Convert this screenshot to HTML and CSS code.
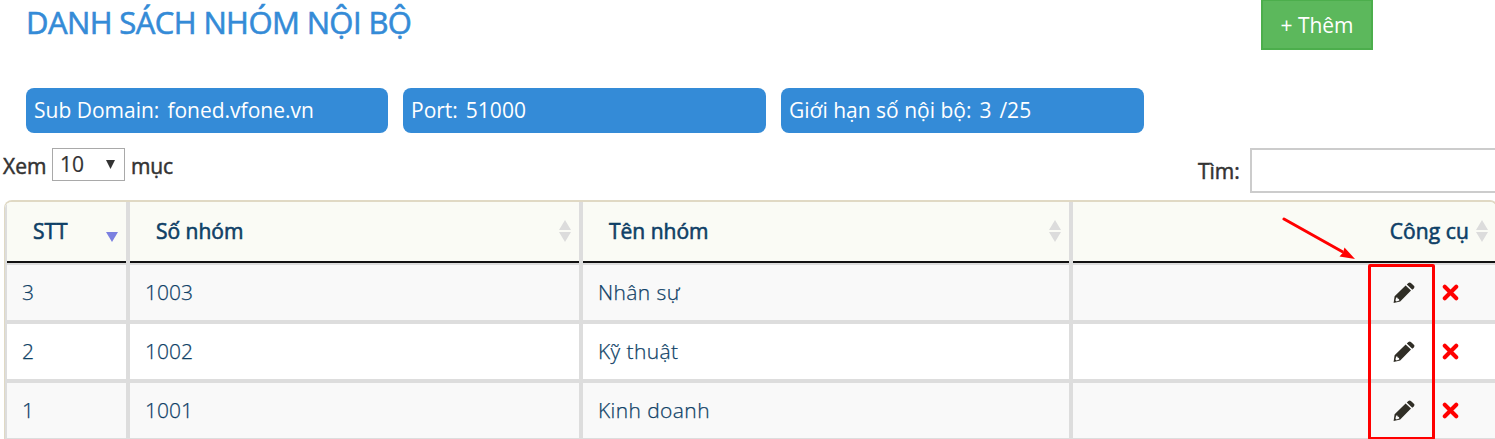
FILE: index.html
```html
<!DOCTYPE html>
<html lang="vi">
<head>
<meta charset="utf-8">
<title>Danh sách nhóm nội bộ</title>
<link rel="stylesheet" href="styles.css">
</head>
<body>
<svg class="defs" width="0" height="0" aria-hidden="true">
  <symbol id="pencil" viewBox="0 0 22 22">
    <path d="M1.6 14.2 12.6 3.4 18 8.6 7.2 19.4 0.6 21zM3.2 15.6 2.4 18.4 3.6 19.4 6.3 18.4 6 16.9 4.6 16.6 4.4 15.4z" fill-rule="evenodd"/>
    <path d="M13.8 2.4 15.4.9Q16.7-.1 17.9.9L20.9 3.8Q22 5 20.9 6.2L19.3 7.7z"/>
  </symbol>
  <symbol id="cross" viewBox="0 0 16 16">
    <path d="M2.6 2.6 13.4 13.4M13.4 2.6 2.6 13.4" fill="none" stroke="currentColor" stroke-width="3.8" stroke-linecap="round"/>
  </symbol>
  <symbol id="sort" viewBox="0 0 12 22">
    <path d="M6 0 12 10H0zM0 12H12L6 22z"/>
  </symbol>
</svg>
<main class="page">
  <header class="top">
    <h1 class="title">DANH SÁCH NHÓM NỘI BỘ</h1>
    <button class="add">+ Thêm</button>
  </header>
  <section class="infos">
    <div class="info"><span>Sub Domain:</span><span>foned.vfone.vn</span></div>
    <div class="info"><span>Port:</span><span>51000</span></div>
    <div class="info"><span>Giới hạn số nội bộ:</span><span>3</span><span>/25</span></div>
  </section>
  <section class="controls">
    <div class="length"><span class="lab-xem">Xem</span><span class="select"><span>10</span><svg width="9" height="9"><path d="M0 0H9L4.5 9z"/></svg></span><span class="lab-muc">mục</span></div>
    <div class="search"><span class="lab-tim">Tìm:</span><input class="field" type="text"></div>
  </section>
  <section class="table">
    <div class="row head">
      <div class="cell"><span>STT</span><svg class="desc" width="12" height="10"><path d="M0 0H12L6 10z"/></svg></div>
      <div class="cell"><span>Số nhóm</span><svg class="sort"><use href="#sort"/></svg></div>
      <div class="cell"><span>Tên nhóm</span><svg class="sort"><use href="#sort"/></svg></div>
      <div class="cell tools"><span>Công cụ</span><svg class="sort"><use href="#sort"/></svg></div>
    </div>
    <div class="row odd">
      <div class="cell">3</div><div class="cell">1003</div><div class="cell name">Nhân sự</div>
      <div class="cell tools"><svg class="pencil"><use href="#pencil"/></svg><svg class="cross"><use href="#cross"/></svg></div>
    </div>
    <div class="row">
      <div class="cell">2</div><div class="cell">1002</div><div class="cell name">Kỹ thuật</div>
      <div class="cell tools"><svg class="pencil"><use href="#pencil"/></svg><svg class="cross"><use href="#cross"/></svg></div>
    </div>
    <div class="row odd">
      <div class="cell">1</div><div class="cell">1001</div><div class="cell name">Kinh doanh</div>
      <div class="cell tools"><svg class="pencil"><use href="#pencil"/></svg><svg class="cross"><use href="#cross"/></svg></div>
    </div>
  </section>
  <svg class="arrow" width="76" height="46"><path d="M2 2 60 34.5" stroke="#f00" stroke-width="3" stroke-linecap="round"/><path d="M73 42 57.5 39.5 61 35.5 62.5 30.5z" fill="#f00"/></svg>
  <div class="highlight"></div>
</main>
</body>
</html>
```

FILE: styles.css
```css
* { box-sizing: border-box; }
body { margin: 0; background: #fff; font-family: "Open Sans", "Noto Sans", sans-serif; font-size: 21px; line-height: 30px; color: #333; }
.defs { position: absolute; }
svg { display: block; flex: none; }
.page { position: relative; width: 1495px; height: 439px; overflow: hidden; white-space: nowrap; }

.top { display: flex; justify-content: space-between; height: 88px; padding: 0 122px 0 26px; }
.title { margin: 0; font-size: 31px; font-weight: 400; line-height: 44px; letter-spacing: -.6px; color: #348bd7; -webkit-text-stroke: .6px #348bd7; }
.add { width: 112px; height: 50px; padding: 1px 0 0; border: 2px solid #4cae4c; border-top-width: 1px; background: #5cb85c; color: #fff; font: 21px/47px "Open Sans", sans-serif; }

.infos { display: grid; grid-template-columns: 362px 363px 363px; column-gap: 15px; padding-left: 26px; height: 60px; }
.info { display: flex; gap: 8px; height: 45px; padding: 0 8px; border-radius: 8px; background: #348bd7; color: #fff; line-height: 45px; }

.controls { display: flex; justify-content: space-between; height: 52px; -webkit-text-stroke: .5px #333; }
.length { display: flex; padding-left: 3px; line-height: 36px; }
.lab-xem { width: 49px; }
.lab-muc { margin-left: 6px; letter-spacing: -.1px; }
.select { display: flex; justify-content: space-between; width: 73px; height: 33px; padding: 0 9px 0 7px; border: 1px solid #a9a9a9; line-height: 31px; -webkit-text-stroke: .2px #333; }
.select svg { margin-top: 11px; fill: #333; }
.search { display: flex; line-height: 46px; }
.lab-tim { width: 52px; }
.field { width: 245px; height: 45px; border: 2px solid #ccc; border-right: 0; background: #fff; }

.table { margin-left: 4px; width: 1494px; height: 300px; border: 2px solid #e0d9c4; border-left-width: 1px; border-bottom: 0; border-radius: 8px 8px 0 0; overflow: hidden; color: #0e3f66; font-weight: 300; -webkit-text-stroke: .25px #0e3f66; }
.row { display: grid; grid-template-columns: 121px 453px 490px 1fr; height: 59px; }
.cell { display: flex; align-items: center; padding: 0 0 2px 15px; border-left: 4px solid #ddd; border-bottom: 4px solid #ddd; background: #fff; }
.cell:first-child { border-left-width: 2px; }
.name { letter-spacing: .4px; }
.odd .cell { background: #f9f9f9; }
.head { height: 63px; border-bottom: 2px solid #ddd; font-weight: 400; -webkit-text-stroke: .6px #0e3f66; }
.head .cell { justify-content: space-between; padding: 0 8px 4px 26px; border-bottom: 0; box-shadow: inset 0 -2px #111; background: #fafbf5; }
.cell.tools { justify-content: flex-end; padding-right: 37px; padding-bottom: 0; }
.head .cell.tools { padding: 0 8px 4px 0; gap: 7px; }
.head .tools span { letter-spacing: .1px; }
.sort { width: 12px; height: 22px; fill: #dcdcdc; stroke: none; }
.desc { margin-top: 13px; fill: #7b80e0; }
.pencil { width: 22px; height: 22px; margin-right: 27px; fill: #302e26; }
.cross { width: 17px; height: 17px; color: #f00; }

.arrow { position: absolute; left: 1282px; top: 217px; }
.highlight { position: absolute; left: 1368px; top: 264px; width: 67px; height: 176px; border: 3px solid #f00; border-radius: 2px; }
```
